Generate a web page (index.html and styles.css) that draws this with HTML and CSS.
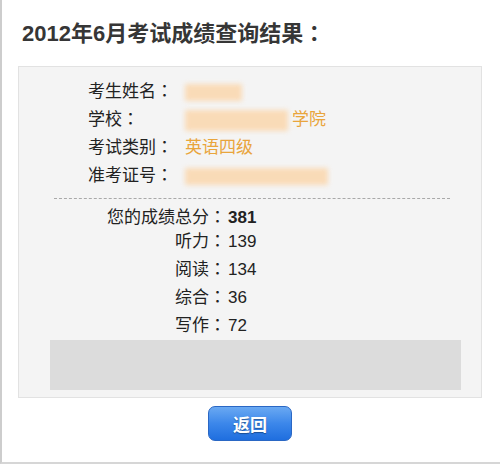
FILE: index.html
```html
<!DOCTYPE html>
<html lang="zh-CN">
<head>
    <meta charset="UTF-8">
    <meta name="viewport" content="width=device-width, initial-scale=1.0">
    <link rel="stylesheet" href="styles.css">
    <title>2012年6月考试成绩查询结果</title>
</head>
<body>
    <div class="page">
        <h1 class="title">2012年6月考试成绩查询结果<span lang="ja">：</span></h1>
        <div class="result-box">
            <div class="info-list">
                <div class="info-row">
                    <span class="info-label">考生姓名<span lang="ja">：</span></span>
                    <span class="info-value"><span class="blur blur-name"></span></span>
                </div>
                <div class="info-row">
                    <span class="info-label">学校<span lang="ja">：</span></span>
                    <span class="info-value"><span class="blur blur-school"></span>学院</span>
                </div>
                <div class="info-row">
                    <span class="info-label">考试类别<span lang="ja">：</span></span>
                    <span class="info-value">英语四级</span>
                </div>
                <div class="info-row">
                    <span class="info-label">准考证号<span lang="ja">：</span></span>
                    <span class="info-value"><span class="blur blur-id"></span></span>
                </div>
            </div>
            <div class="divider"></div>
            <div class="score-list">
                <div class="score-row total">
                    <span class="score-label">您的成绩总分<span lang="ja">：</span></span>
                    <span class="score-value">381</span>
                </div>
                <div class="score-row">
                    <span class="score-label">听力<span lang="ja">：</span></span>
                    <span class="score-value">139</span>
                </div>
                <div class="score-row">
                    <span class="score-label">阅读<span lang="ja">：</span></span>
                    <span class="score-value">134</span>
                </div>
                <div class="score-row">
                    <span class="score-label">综合<span lang="ja">：</span></span>
                    <span class="score-value">36</span>
                </div>
                <div class="score-row">
                    <span class="score-label">写作<span lang="ja">：</span></span>
                    <span class="score-value">72</span>
                </div>
            </div>
            <div class="ad-area"></div>
        </div>
        <div class="btn-container">
            <button class="btn-back">返回</button>
        </div>
    </div>
</body>
</html>
```

FILE: styles.css
```css
body {
    margin: 0;
    padding: 0;
    background-color: #fff;
    font-family: "Liberation Sans", "Noto Sans CJK SC", sans-serif;
    color: #222;
}

.page {
    box-sizing: border-box;
    height: 464px;
    border-left: 2px solid #cdcdcd;
    border-bottom: 2px solid #d6d6d6;
    overflow: hidden;
}

.title {
    margin: 19px 0 0 20px;
    font-size: 22px;
    line-height: 30px;
    font-weight: bold;
    color: #363636;
}

.result-box {
    box-sizing: border-box;
    margin: 17px 0 0 16px;
    width: 464px;
    height: 332px;
    background-color: #f4f4f4;
    border: 1px solid #e2e2e2;
    padding-top: 11px;
}

.info-list {
    padding-left: 69px;
}

.info-row {
    display: flex;
    height: 28px;
    line-height: 28px;
    font-size: 17px;
}

.info-label {
    width: 97px;
}

.info-value {
    display: flex;
    align-items: center;
    color: #e9a53c;
}

.blur {
    display: inline-block;
    background-color: #fbd7ad;
    filter: blur(2.5px);
    opacity: 0.85;
}

.blur-name {
    width: 57px;
    height: 17px;
}

.blur-school {
    width: 103px;
    height: 21px;
    margin-right: 4px;
}

.blur-id {
    width: 143px;
    height: 17px;
}

.divider {
    margin: 8px 0 0 35px;
    width: 396px;
    border-top: 1px dashed #a9a9a9;
}

.score-list {
    margin-top: 5px;
}

.score-row {
    display: grid;
    grid-template-columns: 207px auto;
    height: 28px;
    line-height: 28px;
    font-size: 17px;
}

.score-row.total {
    margin-bottom: -4px;
}

.score-label {
    text-align: right;
}

.score-value {
    padding-left: 2px;
}

.total .score-value {
    font-weight: bold;
}

.ad-area {
    margin: 0 0 0 31px;
    width: 411px;
    height: 50px;
    background-color: #dcdcdc;
}

.btn-container {
    display: flex;
    justify-content: center;
    padding-right: 2px;
    margin-top: 8px;
}

.btn-back {
    width: 84px;
    height: 35px;
    border: 1px solid #2a67c4;
    border-radius: 7px;
    background: linear-gradient(#6aa9f2, #3c87ea 50%, #1f6edf);
    color: #fff;
    font-family: "Noto Sans CJK SC", sans-serif;
    font-size: 17px;
    font-weight: bold;
    text-shadow: 0 1px 1px rgba(0, 0, 0, 0.35);
    cursor: pointer;
}
```
